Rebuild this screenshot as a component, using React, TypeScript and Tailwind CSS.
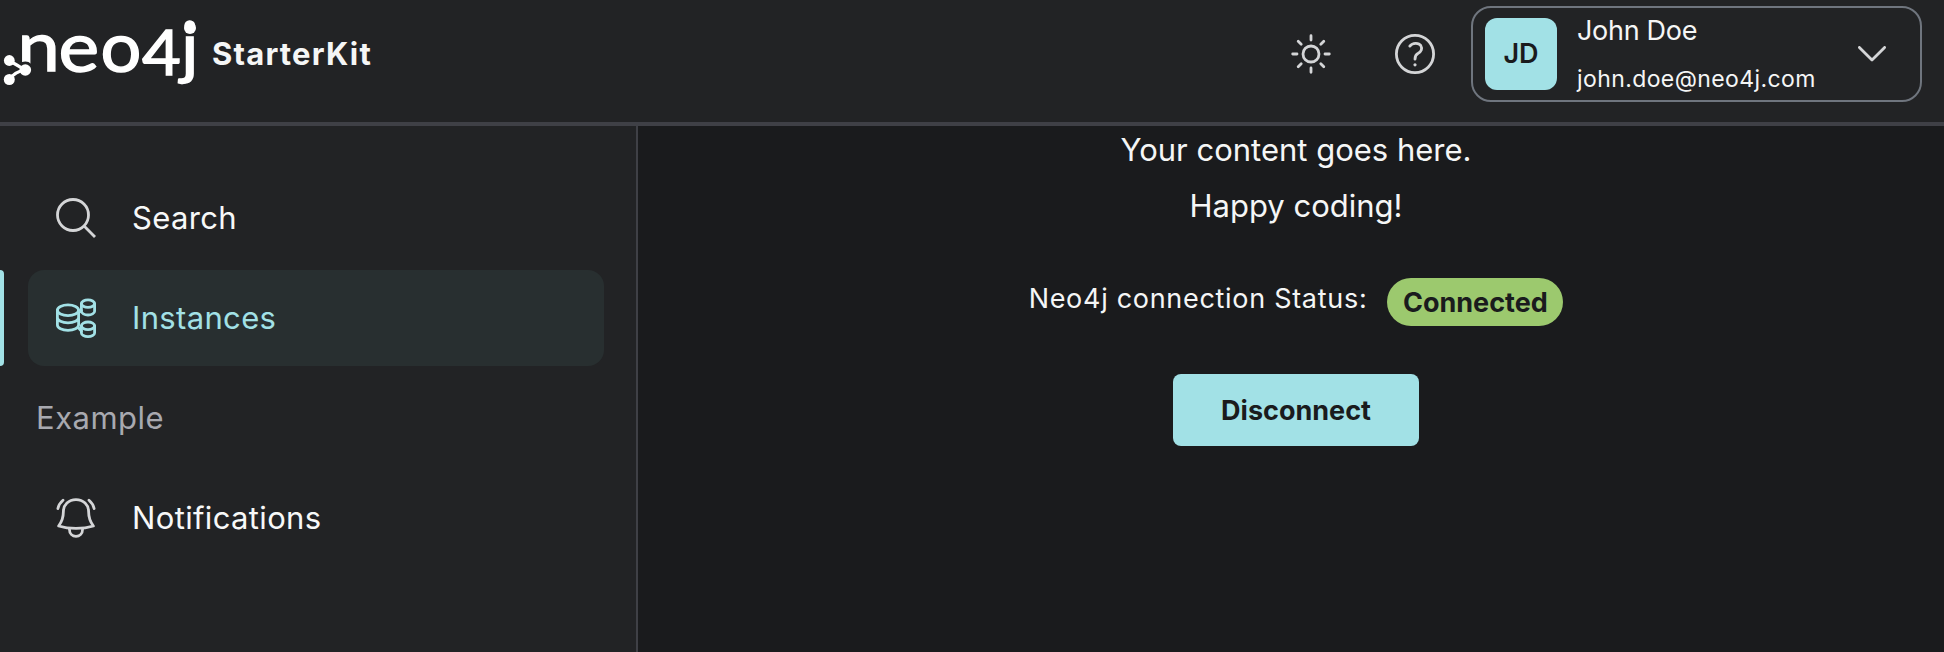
import type { ReactNode } from "react";

const iconProps = {
  viewBox: "0 0 40 40",
  fill: "none",
  stroke: "currentColor",
  strokeWidth: 2.8,
  strokeLinecap: "round" as const,
  strokeLinejoin: "round" as const,
  className: "h-10 w-10 shrink-0",
};

function SunIcon() {
  return (
    <svg {...iconProps}>
      <circle cx="20" cy="20" r="8" />
      <path d="M20 1.7V6M20 34V38.3M1.7 20H6M34 20H38.3M7.2 7.2L10.2 10.2M29.8 29.8L32.8 32.8M7.2 32.8L10.2 29.8M29.8 10.2L32.8 7.2" />
    </svg>
  );
}

function HelpIcon() {
  return (
    <svg {...iconProps}>
      <circle cx="20" cy="20" r="18.6" />
      <path d="M14.8 12.1C17.5 8.5 23.8 8.4 25.8 11.6C27.7 14.8 26.1 17.7 23.2 19.3C20.9 20.5 20 21.8 20 25.2" />
      <circle cx="20" cy="30.8" r="1.6" fill="currentColor" stroke="none" />
    </svg>
  );
}

function SearchIcon() {
  return (
    <svg {...iconProps} strokeLinecap="butt">
      <circle cx="17" cy="17" r="15.5" />
      <path d="M28.1 28.1L39 39" />
    </svg>
  );
}

function InstancesIcon() {
  return (
    <svg {...iconProps}>
      <ellipse cx="12" cy="12.2" rx="10.6" ry="5.4" />
      <path d="M1.4 12.2V27C1.4 30 6 32.4 12 32.4S22.6 30 22.6 27V12.2M1.4 19.4C1.4 22.4 6 24.8 12 24.8S22.6 22.4 22.6 19.4" />
      <ellipse cx="32" cy="5.6" rx="6.6" ry="3.8" />
      <path d="M25.4 5.6V13.2C25.4 15.3 28.4 17 32 17S38.6 15.3 38.6 13.2V5.6" />
      <ellipse cx="32" cy="27.8" rx="6.6" ry="3.8" />
      <path d="M25.4 27.8V35C25.4 37.1 28.4 38.6 32 38.6S38.6 37.1 38.6 35V27.8" />
      <path d="M22.6 14.5L25.4 12.5M22.6 30L25.4 33.2" />
    </svg>
  );
}

function BellIcon() {
  return (
    <svg {...iconProps}>
      <path d="M20 1.6C12.6 1.6 7.4 6.7 7.4 13.5C7.4 20 5.7 24 2.6 28C13 31.3 27 31.3 37.4 28C34.3 24 32.6 20 32.6 13.5C32.6 6.7 27.4 1.6 20 1.6Z" />
      <path d="M13.4 31C13.4 40.7 26.6 40.7 26.6 31M7 2.2C4.4 4.4 2.5 7.3 1.9 10.6M33 2.2C35.6 4.4 37.5 7.3 38.1 10.6" />
    </svg>
  );
}

function Logo() {
  return (
    <svg
      viewBox="0 0 200 96"
      className="h-24 w-[200px] shrink-0 fill-white font-['Lato',sans-serif]"
      role="img"
      aria-label="neo4j"
    >
      <g fontSize="70" stroke="white" strokeWidth="1.4">
        <text transform="translate(17.5 71.3) scale(1.08 1)">n</text>
        <text transform="translate(58.5 72) scale(1.1 1)">e</text>
        <text transform="translate(100.5 72) scale(1.03 1)">o</text>
        <text transform="translate(142 75) scale(1.08 1)" fontSize="62">4</text>
        <text transform="translate(181 71) scale(1.05 .97)">j</text>
      </g>
      <circle cx="25.3" cy="70" r="8.4" className="fill-[#222325]" />
      <path d="M9 60.5Q17 65 25 70Q16 71 9 79.5" fill="none" stroke="white" strokeWidth="3.2" />
      <circle cx="9.3" cy="60.5" r="5.4" />
      <circle cx="25.3" cy="70" r="5.8" />
      <circle cx="9.3" cy="79.5" r="5.5" />
      <circle cx="190" cy="28" r="6" />
    </svg>
  );
}

function NavItem({ icon, label, active }: { icon: ReactNode; label: string; active?: boolean }) {
  return (
    <div className="flex h-24">
      <div className={active ? "w-1 rounded-r-lg bg-[#a2e1e6]" : "w-1"} />
      <div
        className={
          active
            ? "ml-6 flex w-[576px] items-center rounded-2xl bg-[#282f30] pl-7 text-[#a2e1e6]"
            : "ml-6 flex w-[576px] items-center rounded-2xl pl-7 text-[#d4d5d7]"
        }
      >
        {icon}
        <span className={active ? "ml-9 text-[31px] tracking-[0.35px]" : "ml-9 text-[31px] tracking-[0.35px] text-[#f7f8f8]"}>
          {label}
        </span>
      </div>
    </div>
  );
}

export default function App() {
  return (
    <div className="flex h-[652px] w-[1944px] flex-col overflow-hidden bg-[#1a1b1d] font-['Inter',sans-serif] text-[#f5f6f6]">
      <header className="flex h-[126px] shrink-0 border-b-4 border-[#3f4046] bg-[#222325]">
        <Logo />
        <div className="ml-3 flex h-[108px] items-center text-[31px] font-bold tracking-[1.2px]">StarterKit</div>
        <div className="ml-auto flex h-[108px] items-center text-[#d4d5d7]">
          <SunIcon />
          <div className="ml-16">
            <HelpIcon />
          </div>
          <div className="ml-9 flex h-24 w-[451px] items-center rounded-[20px] border-2 border-[#6f757e] pl-3">
            <div className="flex h-[72px] w-[72px] items-center justify-center rounded-xl bg-[#a2e1e6] text-[27px] font-semibold text-[#1a1b1d]">
              JD
            </div>
            <div className="ml-5 flex w-[260px] flex-col whitespace-nowrap text-[#f5f6f6]">
              <span className="h-12 text-[27px] leading-[49px] tracking-[-0.3px]">John Doe</span>
              <span className="h-12 text-[23px] leading-[50px] tracking-[0.4px]">john.doe@neo4j.com</span>
            </div>
            <svg viewBox="0 0 28 16" className="ml-[21px] h-4 w-7" fill="none" stroke="currentColor" strokeWidth="2.8" strokeLinecap="round" strokeLinejoin="round">
              <path d="M1.4 1.4L14 14L26.6 1.4" />
            </svg>
          </div>
          <div className="w-[22px]" />
        </div>
      </header>
      <div className="flex min-h-0 flex-1">
        <nav className="flex w-[638px] shrink-0 flex-col gap-1 border-r-2 border-[#3f4046] bg-[#222325] pt-11">
          <NavItem icon={<SearchIcon />} label="Search" />
          <NavItem icon={<InstancesIcon />} label="Instances" active />
          <div className="flex h-24 items-center pl-9 text-[31px] tracking-[0.5px] text-[#a8a9b0]">Example</div>
          <NavItem icon={<BellIcon />} label="Notifications" />
        </nav>
        <main className="flex flex-1 flex-col items-center pl-[10px]">
          <p className="-mt-1 h-14 text-[31px] leading-[55px]">Your content goes here.</p>
          <p className="h-14 text-[31px] leading-[55px]">Happy coding!</p>
          <div className="mt-11 flex h-12">
            <span className="mr-5 text-[27px] leading-[41px] tracking-[0.7px] whitespace-nowrap">Neo4j connection Status:</span>
            <span className="flex h-12 w-[176px] items-center justify-center rounded-full bg-[#9cc96e] pt-[3px] text-[27px] font-bold text-[#1a1b1d]">
              Connected
            </span>
          </div>
          <button className="mt-12 h-[72px] w-[246px] rounded-lg bg-[#a2e1e6] pt-0.5 text-[27px] font-bold text-[#1a1b1d]">
            Disconnect
          </button>
        </main>
      </div>
    </div>
  );
}
